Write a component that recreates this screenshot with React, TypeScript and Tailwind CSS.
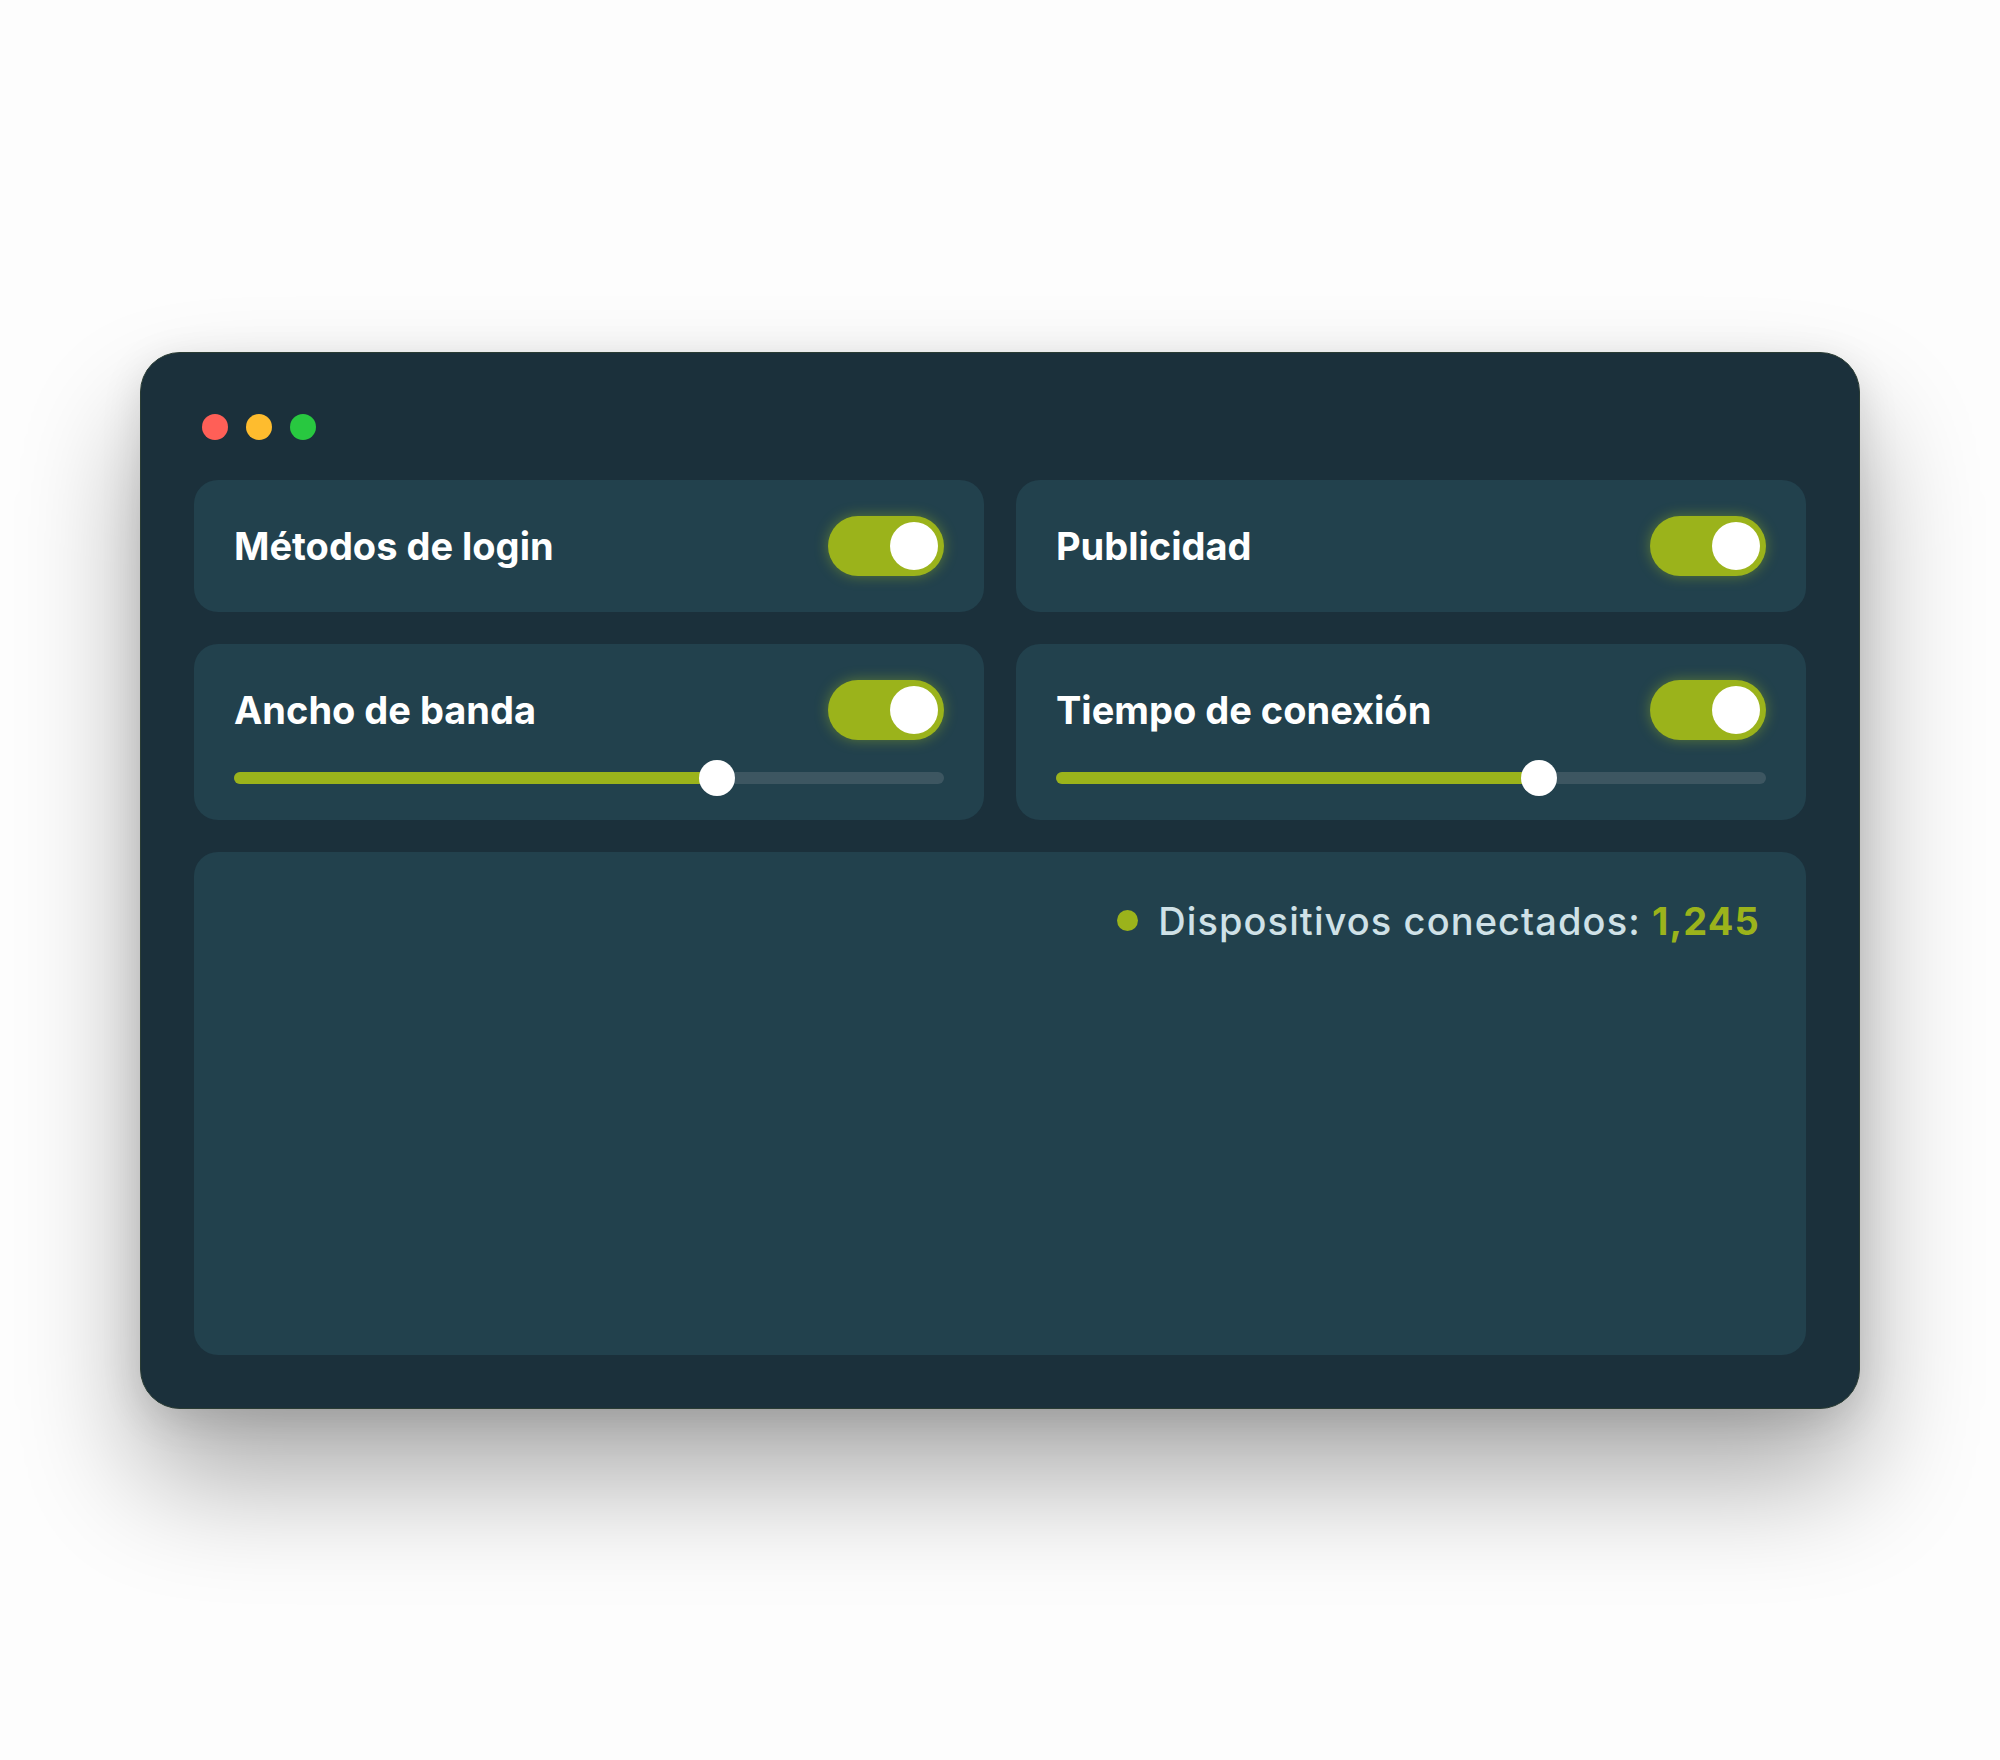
import React from "react";

const font = { fontFamily: "Inter, 'Noto Sans', sans-serif" };

function Toggle() {
  return (
    <div className="flex h-[60px] w-[116px] shrink-0 items-center justify-end rounded-full bg-[#9bb31b] px-[6px] shadow-[0_0_14px_rgba(160,190,30,0.45)]">
      <div className="h-[48px] w-[48px] rounded-full bg-white" />
    </div>
  );
}

function Slider({ value }: { value: number }) {
  return (
    <div className="relative mt-8 h-3 w-full rounded-full bg-[#3d5661]">
      <div
        className="absolute left-0 top-0 h-3 rounded-full bg-[#9bb31b]"
        style={{ width: `${value}%` }}
      />
      <div
        className="absolute top-1/2 h-9 w-9 -translate-x-1/2 -translate-y-1/2 rounded-full bg-white"
        style={{ left: `${value}%` }}
      />
    </div>
  );
}

function SettingCard({ title, slider }: { title: string; slider?: number }) {
  return (
    <div className="rounded-3xl bg-[#22414d] px-10 py-9">
      <div className="flex items-center justify-between">
        <span className="text-[38px] font-bold leading-none text-white">
          {title}
        </span>
        <Toggle />
      </div>
      {slider !== undefined && <Slider value={slider} />}
    </div>
  );
}

export default function App() {
  return (
    <div className="flex h-[1760px] w-full items-center justify-center bg-[#fdfdfd]" style={font}>
      <div className="w-[1720px] rounded-[40px] border border-[#2a3c34] bg-[#1b303b] p-[53px] shadow-[0_70px_120px_rgba(0,0,0,0.33),0_10px_40px_rgba(0,0,0,0.12)]">
        {/* window controls */}
        <div className="flex gap-[18px] px-2 pt-2 pb-10">
          <span className="h-[26px] w-[26px] rounded-full bg-[#ff5f57]" />
          <span className="h-[26px] w-[26px] rounded-full bg-[#febc2e]" />
          <span className="h-[26px] w-[26px] rounded-full bg-[#28c840]" />
        </div>

        <div className="grid grid-cols-2 gap-8">
          <SettingCard title="Métodos de login" />
          <SettingCard title="Publicidad" />
          <SettingCard title="Ancho de banda" slider={68} />
          <SettingCard title="Tiempo de conexión" slider={68} />
        </div>

        <div className="mt-8 flex h-[503px] justify-end rounded-3xl bg-[#22414d] pr-[46px] pt-[47px]">
          <div className="flex h-[44px] items-center gap-5">
            <span className="h-[21px] w-[21px] rounded-full bg-[#9bb31b]" />
            <span className="text-[38px] font-medium leading-none tracking-[1.1px] text-[#cfe1e7]">
              Dispositivos conectados:{" "}
              <span className="font-bold text-[#9bb31b]">1,245</span>
            </span>
          </div>
        </div>
      </div>
    </div>
  );
}
